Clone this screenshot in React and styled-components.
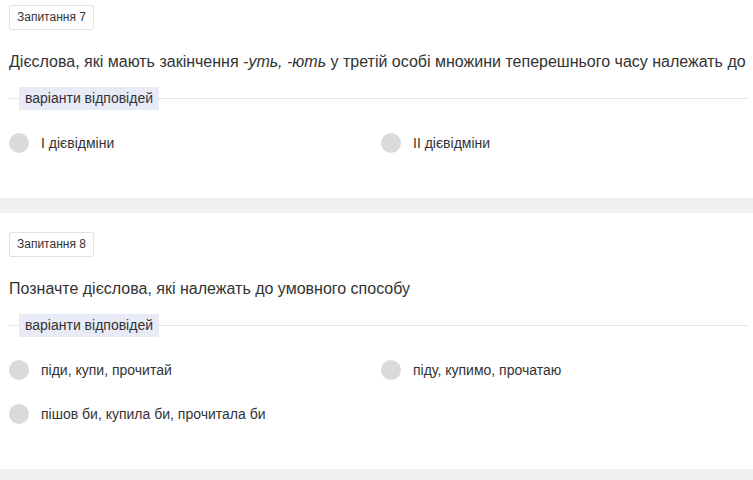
import React from "react";
import styled, { createGlobalStyle } from "styled-components";

const Global = createGlobalStyle`
  html, body { margin: 0; padding: 0; background: #f0f0f0; }
  body { font-family: "Liberation Sans", Arial, sans-serif; color: #333; overflow: hidden; }
`;

const Page = styled.div`
  display: flex;
  flex-direction: column;
  gap: 15px;
  margin-top: -14px;
`;

const Card = styled.section`
  background: #fff;
  padding: 19px 5px 45px 9px;
  display: flex;
  flex-direction: column;
`;

const Badge = styled.div`
  align-self: flex-start;
  box-sizing: border-box;
  height: 25px;
  padding: 0 7px;
  border: 1px solid #e2e2e2;
  border-radius: 2px;
  font-size: 12px;
  line-height: 23px;
  color: #333;
`;

const Question = styled.div`
  margin-top: 20px;
  font-size: 16px;
  line-height: 24px;
  color: #333;
  white-space: nowrap;
  em { font-style: italic; }
`;

const Legend = styled.div`
  margin-top: 13px;
  display: flex;
  align-items: center;
  height: 23px;
  &::before, &::after {
    content: "";
    height: 1px;
    background: #e6e6e6;
  }
  &::before { width: 10px; }
  &::after { flex: 1; }
`;

const LegendLabel = styled.span`
  background: #e8eaf6;
  padding: 0 6px;
  font-size: 14px;
  line-height: 23px;
  color: #333;
`;

const Options = styled.div`
  margin-top: 23px;
  display: grid;
  grid-template-columns: 372px 1fr;
  row-gap: 24px;
`;

const Option = styled.label`
  display: flex;
  align-items: center;
  gap: 12px;
  height: 20px;
  font-size: 14px;
  color: #333;
`;

const Radio = styled.span`
  width: 20px;
  height: 20px;
  border-radius: 50%;
  background: #dadada;
  flex: none;
`;

const questions = [
  {
    n: 7,
    text: (
      <>
        Дієслова, які мають закінчення <em>-уть, -ють</em> у третій особі множини теперешнього часу належать до
      </>
    ),
    options: ["І дієвідміни", "ІІ дієвідміни"],
  },
  {
    n: 8,
    text: "Позначте дієслова, які належать до умовного способу",
    options: ["піди, купи, прочитай", "піду, купимо, прочатаю", "пішов би, купила би, прочитала би"],
  },
];

export default function App() {
  return (
    <>
      <Global />
      <Page>
        {questions.map((q) => (
          <Card key={q.n}>
            <Badge>Запитання {q.n}</Badge>
            <Question>{q.text}</Question>
            <Legend>
              <LegendLabel>варіанти відповідей</LegendLabel>
            </Legend>
            <Options>
              {q.options.map((o) => (
                <Option key={o}>
                  <Radio />
                  {o}
                </Option>
              ))}
            </Options>
          </Card>
        ))}
      </Page>
    </>
  );
}
